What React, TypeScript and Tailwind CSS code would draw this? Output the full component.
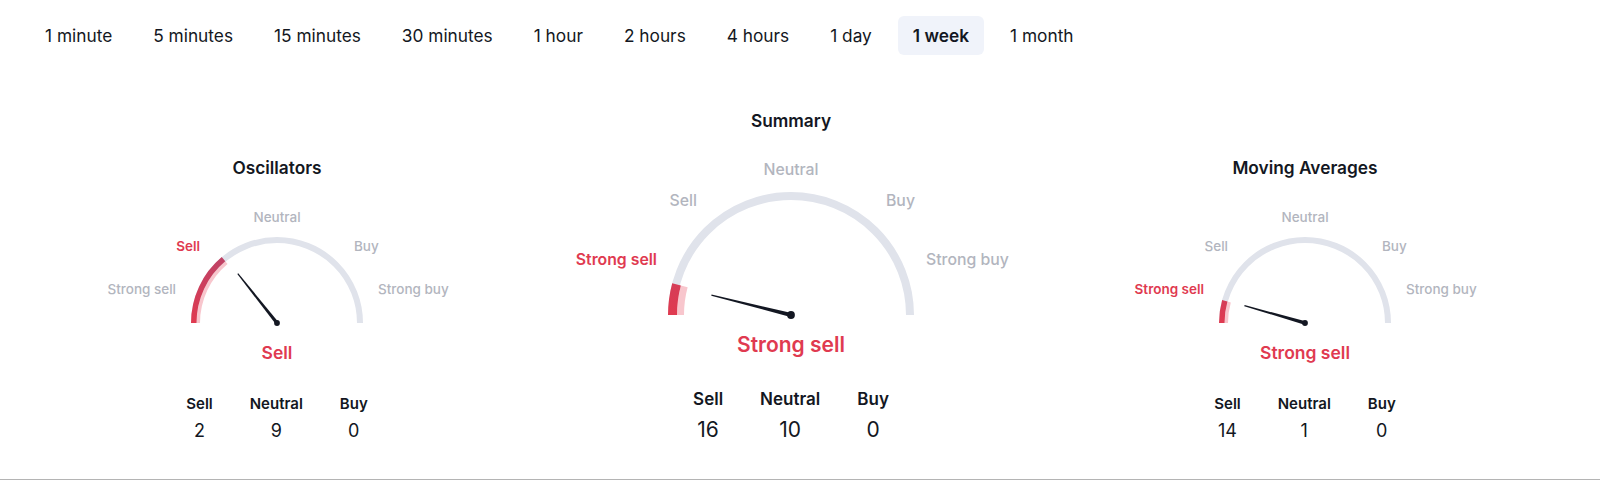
import { useState } from 'react';

const RED = '#e03a50';
const PINK = '#f8c6cd';
const TRACK = '#e0e3eb';
const MUTED = '#b2b5be';

const periods = ['1 minute', '5 minutes', '15 minutes', '30 minutes', '1 hour', '2 hours', '4 hours', '1 day', '1 week', '1 month'];

const sizes = {
  sm: {
    w: 400, h: 130, cx: 200, cy: 123, r: 86, track: 6, red: 5.5, pink: 3.5, needle: 63, dot: 2.9, font: 13.5, w0: 1.7,
    labels: [
      { text: 'Strong sell', x: 99, y: 90, anchor: 'end' },
      { text: 'Sell', x: 123, y: 47, anchor: 'end' },
      { text: 'Neutral', x: 200, y: 18, anchor: 'middle' },
      { text: 'Buy', x: 277, y: 47, anchor: 'start' },
      { text: 'Strong buy', x: 301, y: 90, anchor: 'start' },
    ],
  },
  lg: {
    w: 500, h: 170, cx: 250, cy: 165, r: 123, track: 8, red: 9, pink: 7, needle: 82, dot: 3.9, font: 15.8, w0: 2,
    labels: [
      { text: 'Strong sell', x: 116, y: 111, anchor: 'end' },
      { text: 'Sell', x: 156, y: 52, anchor: 'end' },
      { text: 'Neutral', x: 250, y: 21, anchor: 'middle' },
      { text: 'Buy', x: 345, y: 52, anchor: 'start' },
      { text: 'Strong buy', x: 385, y: 111, anchor: 'start' },
    ],
  },
};

// angle in degrees from the left end of the dial (0 = left, 180 = right)
function pt(cx: number, cy: number, r: number, deg: number) {
  const a = (deg * Math.PI) / 180;
  return [cx - r * Math.cos(a), cy - r * Math.sin(a)];
}

function arc(cx: number, cy: number, r: number, from: number, to: number) {
  const [x1, y1] = pt(cx, cy, r, from);
  const [x2, y2] = pt(cx, cy, r, to);
  return `M ${x1} ${y1} A ${r} ${r} 0 0 1 ${x2} ${y2}`;
}

function Gauge({ id, size, needle, fill, active }: { id: string; size: 'sm' | 'lg'; needle: number; fill: number; active: number }) {
  const s = sizes[size];
  const trackR = s.r - s.track / 2;
  const redR = s.r - s.red / 2;
  const pinkR = s.r - s.red - s.pink / 2;

  const a = (needle * Math.PI) / 180;
  const ux = -Math.cos(a);
  const uy = -Math.sin(a);
  const nx = -uy;
  const ny = ux;
  const w1 = 0.6;
  const tx = s.cx + ux * s.needle;
  const ty = s.cy + uy * s.needle;
  const poly = [
    [s.cx + nx * s.w0, s.cy + ny * s.w0],
    [tx + nx * w1, ty + ny * w1],
    [tx - nx * w1, ty - ny * w1],
    [s.cx - nx * s.w0, s.cy - ny * s.w0],
  ]
    .map((p) => p.join(','))
    .join(' ');

  return (
    <svg width={s.w} height={s.h} viewBox={`0 0 ${s.w} ${s.h}`} className="block">
      <defs>
        <linearGradient id={id} gradientUnits="userSpaceOnUse" x1="0" y1={s.cy} x2="0" y2={s.cy - s.r}>
          <stop offset="0" stopColor={RED} />
          <stop offset="1" stopColor="#b5456c" />
        </linearGradient>
      </defs>
      <path d={arc(s.cx, s.cy, trackR, 0, 180)} fill="none" stroke={TRACK} strokeWidth={s.track} />
      <path d={arc(s.cx, s.cy, pinkR, 0, fill)} fill="none" stroke={PINK} strokeWidth={s.pink} />
      <path d={arc(s.cx, s.cy, redR, 0, fill)} fill="none" stroke={`url(#${id})`} strokeWidth={s.red} />
      {s.labels.map((l, i) => (
        <text
          key={l.text}
          x={l.x}
          y={l.y}
          textAnchor={l.anchor as 'start' | 'middle' | 'end'}
          dominantBaseline="middle"
          fontSize={s.font}
          fontWeight={i === active ? 600 : 500}
          fill={i === active ? RED : MUTED}
          fontFamily="Inter, sans-serif"
        >
          {l.text}
        </text>
      ))}
      <polygon points={poly} fill="#131722" />
      <circle cx={s.cx} cy={s.cy} r={s.dot} fill="#131722" />
    </svg>
  );
}

function Counts({ values, big }: { values: number[]; big?: boolean }) {
  const names = ['Sell', 'Neutral', 'Buy'];
  return (
    <div className={`flex gap-[37px] ${big ? 'mt-[28px]' : 'mt-[29px]'}`}>
      {names.map((n, i) => (
        <div key={n} className="flex flex-col items-center">
          <span className={`font-semibold text-[#131722] ${big ? 'text-[17px] leading-6' : 'text-[15px] leading-5'}`}>{n}</span>
          <span className={`text-[#131722] ${big ? 'mt-[3px] text-[21px] leading-8' : 'mt-[5px] text-[18px] leading-6'}`}>{values[i]}</span>
        </div>
      ))}
    </div>
  );
}

export default function App() {
  const [period, setPeriod] = useState('1 week');

  return (
    <div className="h-[480px] w-full overflow-hidden border-b border-[#b4b4b4] bg-white" style={{ fontFamily: 'Inter, "Noto Sans", sans-serif' }}>
      <div className="flex gap-[11px] pl-[30px] pt-[16px]">
        {periods.map((p) => (
          <button
            key={p}
            onClick={() => setPeriod(p)}
            className={`h-[39px] rounded-md px-[15px] text-[17.3px] text-[#131722] ${p === period ? 'bg-[#f0f3fa] font-semibold' : ''}`}
          >
            {p}
          </button>
        ))}
      </div>

      <div className="ml-[20px] mt-[54px] grid w-[1542px] grid-cols-3 items-start">
        <div className="flex flex-col items-center pt-[47px]">
          <h3 className="text-[17.3px] font-semibold leading-6 text-[#131722]">Oscillators</h3>
          <div className="mt-[20px]">
            <Gauge id="g-osc" size="sm" needle={51.5} fill={50} active={1} />
          </div>
          <div className="mt-[11px] text-[17.5px] font-semibold leading-6 text-[#e03a50]">Sell</div>
          <Counts values={[2, 9, 0]} />
        </div>

        <div className="flex flex-col items-center">
          <h3 className="text-[17.3px] font-semibold leading-6 text-[#131722]">Summary</h3>
          <div className="mt-[17px]">
            <Gauge id="g-sum" size="lg" needle={14} fill={15} active={0} />
          </div>
          <div className="mt-[11px] text-[21px] font-semibold leading-7 text-[#e03a50]">Strong sell</div>
          <Counts values={[16, 10, 0]} big />
        </div>

        <div className="flex flex-col items-center pt-[47px]">
          <h3 className="text-[17.3px] font-semibold leading-6 text-[#131722]">Moving Averages</h3>
          <div className="mt-[20px]">
            <Gauge id="g-ma" size="sm" needle={16} fill={15.5} active={0} />
          </div>
          <div className="mt-[11px] text-[17.5px] font-semibold leading-6 text-[#e03a50]">Strong sell</div>
          <Counts values={[14, 1, 0]} />
        </div>
      </div>
    </div>
  );
}
